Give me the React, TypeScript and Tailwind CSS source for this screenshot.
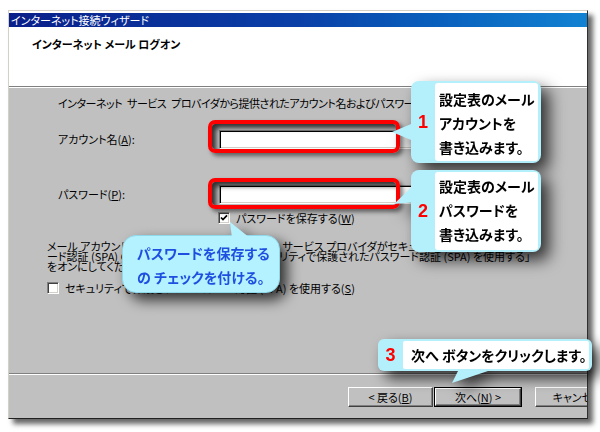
import React from "react";

function U({ children }: { children: React.ReactNode }) {
  return <span className="underline underline-offset-[1px]">{children}</span>;
}

function Checkbox({ checked }: { checked?: boolean }) {
  return (
    <div className="w-[12px] h-[12px] shrink-0 bg-white border border-t-[#808080] border-l-[#808080] border-b-white border-r-white shadow-[inset_1px_1px_0_#404040,inset_-1px_-1px_0_#d4d0c8] flex items-center justify-center">
      {checked && (
        <svg width="8" height="8" viewBox="0 0 8 8">
          <path d="M1 3.5 L3 5.6 L7 1.4" stroke="#000" strokeWidth="1.7" fill="none" />
        </svg>
      )}
    </div>
  );
}

function Field() {
  return (
    <div className="w-[300px] h-[19px] shrink-0 bg-white border border-t-[#808080] border-l-[#808080] border-r-white border-b-white shadow-[inset_1px_1px_0_#000,inset_-1px_-1px_0_#d4d0c8]" />
  );
}

export default function App() {
  return (
    <div className="relative w-[600px] h-[432px] overflow-hidden bg-white text-black font-['Noto_Sans_CJK_JP',sans-serif] [font-feature-settings:'palt']">
      {/* Window */}
      <div className="pt-[10px] pl-[8px]">
        <div className="w-[580px] h-[409px] flex flex-col overflow-hidden bg-white border border-t-[#d4d0c8] border-l-[#d4d0c8] border-r-[#303030] border-b-[#202020] shadow-[5px_5px_5px_rgba(0,0,0,0.6)]">
          <div className="h-[2px] shrink-0 bg-white" />
          <div className="h-[14px] shrink-0 bg-linear-to-r from-[#0a1f8a] via-[#0b3fa8] to-[#1382d2] text-white text-[11px] leading-[14px] pl-[2px] whitespace-nowrap">
            インターネット接続ウィザード
          </div>
          <div className="h-[59px] shrink-0 bg-white pl-[23px] pt-[10px] text-[11px] leading-[14px] font-bold">
            インターネット メール ログオン
          </div>
          <div className="h-[2px] shrink-0 border-t border-t-[#808080] border-b border-b-white" />
          {/* Body */}
          <div className="h-[285px] shrink-0 bg-[#c0c0c0] pt-[8px] text-[11px] whitespace-nowrap">
            <div className="ml-[49px] leading-[14px] tracking-[-0.5px]">
              {"インターネット\u2002サービス\u2002プロバイダから提供されたアカウント名およびパスワードを入力してください。"}
            </div>
            <div className="ml-[49px] mt-[20px] h-[19px] flex items-center">
              <span className="w-[161px] leading-[19px]">
                アカウント名(<U>A</U>):
              </span>
              <Field />
            </div>
            <div className="ml-[49px] mt-[36px] h-[19px] flex items-center">
              <span className="w-[161px] leading-[19px]">
                パスワード(<U>P</U>):
              </span>
              <Field />
            </div>
            <div className="ml-[209px] mt-[8px] h-[12px] flex items-center gap-[6px] leading-[12px]">
              <Checkbox checked />
              <span>
                パスワードを保存する(<U>W</U>)
              </span>
            </div>
            <div className="ml-[38px] mt-[17px] leading-[10px]">
              <div>メール アカウントアクセスするため インターネット サービス プロバイダがセキュリティで保護された</div>
              <div>ード認証 (SPA) の使用を要求する場合は、「セキュリティで保護されたパスワード認証 (SPA) を使用する」</div>
              <div>をオンにしてください。</div>
            </div>
            <div className="ml-[38px] mt-[11px] h-[12px] flex items-center gap-[6px] leading-[12px]">
              <Checkbox />
              <span>
                セキュリティで保護されたパスワード認証 (SPA) を使用する(<U>S</U>)
              </span>
            </div>
          </div>
          <div className="h-[2px] shrink-0 border-t border-t-[#808080] border-b border-b-white" />
          {/* Footer */}
          <div className="flex-1 bg-[#c0c0c0] pt-[12px] pl-[339px] flex items-start text-[11px] whitespace-nowrap">
            <div className="w-[85px] h-[20px] shrink-0 flex items-center justify-center border border-t-white border-l-white border-r-[#404040] border-b-[#404040] shadow-[inset_-1px_-1px_0_#808080]">
              &lt; 戻る(<U>B</U>)
            </div>
            <div className="ml-[1px] w-[88px] h-[20px] shrink-0 border border-black">
              <div className="w-full h-full flex items-center justify-center border border-t-white border-l-white border-r-[#404040] border-b-[#404040] shadow-[inset_-1px_-1px_0_#808080]">
                次へ(<U>N</U>) &gt;
              </div>
            </div>
            <div className="ml-[13px] w-[85px] h-[20px] shrink-0 flex items-center justify-center border border-t-white border-l-white border-r-[#404040] border-b-[#404040] shadow-[inset_-1px_-1px_0_#808080]">
              キャンセル
            </div>
          </div>
        </div>
      </div>

      {/* Red highlights */}
      <div className="absolute left-[208px] top-[120px] w-[192px] h-[33px] rounded-[7px] border-[4px] border-[#ff0000] shadow-[inset_4px_4px_5px_rgba(0,0,0,0.75),3px_3px_4px_rgba(0,0,0,0.5)]" />
      <div className="absolute left-[208px] top-[178px] w-[192px] h-[31px] rounded-[7px] border-[4px] border-[#ff0000] shadow-[inset_4px_4px_5px_rgba(0,0,0,0.75),3px_3px_4px_rgba(0,0,0,0.5)]" />

      {/* Callout 1 */}
      <div className="absolute left-[390px] top-[81px] w-[151px] h-[82px] [filter:drop-shadow(8px_8px_8px_rgba(0,0,0,0.75))]">
        <svg className="absolute left-0 top-0" width="30" height="82" viewBox="0 0 30 82">
          <polygon points="2,51 26,41 26,61" fill="#b4f0fc" />
        </svg>
        <div className="ml-[21px] w-[130px] h-[82px] rounded-[8px] bg-[#b4f0fc] flex pt-[2px] pb-[2px] pr-[3px]">
          <div className="w-[24px] flex items-center justify-center text-[#ff0000] text-[18px] font-bold font-['Liberation_Sans',sans-serif]">1</div>
          <div className="flex-1 bg-white rounded-[3px] pl-[4px] pt-[4px] text-[14px] leading-[24px] font-bold whitespace-nowrap">
            <div>設定表のメール</div>
            <div>アカウントを</div>
            <div>書き込みます。</div>
          </div>
        </div>
      </div>

      {/* Callout 2 */}
      <div className="absolute left-[390px] top-[170px] w-[151px] h-[82px] [filter:drop-shadow(8px_8px_8px_rgba(0,0,0,0.75))]">
        <svg className="absolute left-0 top-0" width="30" height="82" viewBox="0 0 30 82">
          <polygon points="4,34 26,13 26,32" fill="#b4f0fc" />
        </svg>
        <div className="ml-[21px] w-[130px] h-[82px] rounded-[8px] bg-[#b4f0fc] flex pt-[2px] pb-[2px] pr-[3px]">
          <div className="w-[24px] flex items-center justify-center text-[#ff0000] text-[18px] font-bold font-['Liberation_Sans',sans-serif]">2</div>
          <div className="flex-1 bg-white rounded-[3px] pl-[4px] pt-[2px] text-[14px] leading-[24px] font-bold whitespace-nowrap">
            <div>設定表のメール</div>
            <div>パスワードを</div>
            <div>書き込みます。</div>
          </div>
        </div>
      </div>

      {/* Callout: save password */}
      <div className="absolute left-[122px] top-[222px] w-[160px] h-[72px] [filter:drop-shadow(7px_7px_7px_rgba(0,0,0,0.75))]">
        <svg className="absolute left-0 top-0" width="160" height="20" viewBox="0 0 160 20">
          <polygon points="108,0 110,16 128,16" fill="#b4f2ff" />
        </svg>
        <div className="mt-[13px] w-[158px] h-[58px] rounded-[14px] bg-[#b4f2ff] border border-[#8fd8ea] pl-[14px] pt-[5px] text-[14px] leading-[24px] font-bold text-[#1e4fe0] whitespace-nowrap">
          <div>パスワードを保存する</div>
          <div>の チェックを付ける。</div>
        </div>
      </div>

      {/* Callout 3 */}
      <div className="absolute left-[378px] top-[339px] w-[215px] h-[46px] [filter:drop-shadow(7px_7px_7px_rgba(0,0,0,0.75))]">
        <svg className="absolute left-0 top-0" width="215" height="46" viewBox="0 0 215 46">
          <polygon points="74,44 82,28 122,28" fill="#b4f0fc" />
        </svg>
        <div className="relative w-[214px] h-[32px] rounded-[6px] bg-[#b4f0fc] flex pt-[2px] pb-[2px] pr-[3px]">
          <div className="w-[25px] flex items-center justify-center text-[#ff0000] text-[18px] font-bold font-['Liberation_Sans',sans-serif]">3</div>
          <div className="flex-1 bg-white rounded-[2px] pl-[8px] flex items-center text-[14px] font-bold whitespace-nowrap">
            次へ ボタンをクリックします。
          </div>
        </div>
      </div>
    </div>
  );
}
